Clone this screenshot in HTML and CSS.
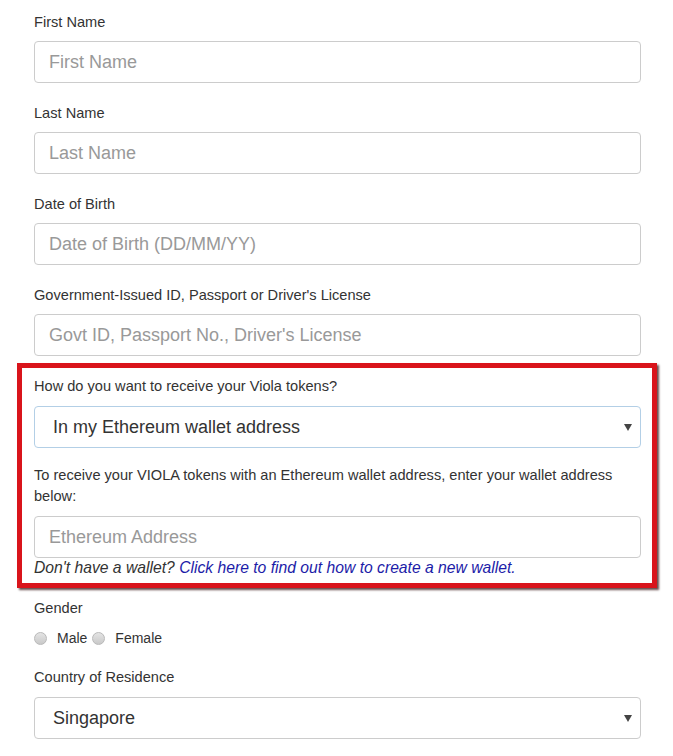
FILE: index.html
```html
<!DOCTYPE html>
<html lang="en">
<head>
  <meta charset="UTF-8">
  <title>Token Sale Registration</title>
  <link rel="stylesheet" href="styles.css">
</head>
<body>

  <form class="signup">
    <div class="field">
      <label>First Name</label>
      <input type="text" class="control" placeholder="First Name">
    </div>

    <div class="field">
      <label>Last Name</label>
      <input type="text" class="control" placeholder="Last Name">
    </div>

    <div class="field">
      <label>Date of Birth</label>
      <input type="text" class="control" placeholder="Date of Birth (DD/MM/YY)">
    </div>

    <div class="field last">
      <label>Government-Issued ID, Passport or Driver's License</label>
      <input type="text" class="control" placeholder="Govt ID, Passport No., Driver's License">
    </div>

    <div class="highlight">
      <div class="field">
        <label>How do you want to receive your Viola tokens?</label>
        <div class="select-wrap">
          <select class="control select active">
            <option>In my Ethereum wallet address</option>
          </select>
        </div>
      </div>

      <p class="hint">To receive your VIOLA tokens with an Ethereum wallet address, enter your wallet address below:</p>
      <input type="text" class="control" placeholder="Ethereum Address">
      <p class="wallet-note">Don't have a wallet? <a href="#">Click here to find out how to create a new wallet.</a></p>
    </div>

    <div class="gender">
      <label>Gender</label>
      <div class="radios">
        <label class="radio"><input type="radio" name="gender"> Male</label>
        <label class="radio"><input type="radio" name="gender"> Female</label>
      </div>
    </div>

    <div class="field country">
      <label>Country of Residence</label>
      <div class="select-wrap">
        <select class="control select">
          <option>Singapore</option>
        </select>
      </div>
    </div>
  </form>

</body>
</html>
```

FILE: styles.css
```css
body {
  margin: 0;
  background-color: #fff;
  font-family: "Liberation Sans", Arial, sans-serif;
  font-size: 14.6px;
  line-height: 20px;
  color: #333;
}

.signup {
  width: 607px;
  padding: 12px 0 0 34px;
}

.field {
  margin-bottom: 20px;
}

.field.last {
  margin-bottom: 7px;
}

.field > label,
.gender > label {
  display: block;
  margin-bottom: 9px;
}

.control {
  display: block;
  box-sizing: border-box;
  width: 100%;
  height: 42px;
  padding: 0 14px;
  font-family: "Liberation Sans", Arial, sans-serif;
  font-size: 18px;
  color: #333;
  background-color: #fff;
  border: 1px solid #ccc;
  border-radius: 4px;
  outline: none;
}

.control::placeholder {
  color: #999;
}

.select-wrap {
  position: relative;
}

.select {
  appearance: none;
  -webkit-appearance: none;
  padding-left: 18px;
}

.select.active {
  border-color: #b3cfe6;
}

.select-wrap::after {
  content: "";
  position: absolute;
  right: 9px;
  top: 18px;
  border-left: 4px solid transparent;
  border-right: 4px solid transparent;
  border-top: 7px solid #444;
}

/* red box around the wallet section */
.highlight {
  width: 607px;
  margin-left: -17px;
  padding: 8px 11px 5px 12px;
  border: 5px solid #d9141b;
  box-shadow: 2px 2px 2px rgba(40, 0, 0, 0.7);
}

.highlight .field {
  margin-bottom: 17px;
}

.highlight .field > label,
.country > label {
  margin-bottom: 10px;
}

.hint {
  margin: 0 0 9px;
  line-height: 21px;
}

.wallet-note {
  margin: 0;
  font-size: 15.7px;
  font-style: italic;
}

.wallet-note a {
  color: #1c1ca8;
  text-decoration: none;
}

.gender {
  margin: 10px 0 19px;
}

.gender > label {
  margin-bottom: 10px;
}

.radios {
  display: flex;
  align-items: center;
  height: 20px;
  font-size: 14px;
}

.radio {
  display: flex;
  align-items: center;
  margin-right: 5px;
}

.radio input {
  appearance: none;
  -webkit-appearance: none;
  width: 13px;
  height: 13px;
  margin: 0 10px 0 0;
  border: 1px solid #b9b9b9;
  border-radius: 50%;
  background: linear-gradient(#e4e4e4, #c9c9c9);
}
```
